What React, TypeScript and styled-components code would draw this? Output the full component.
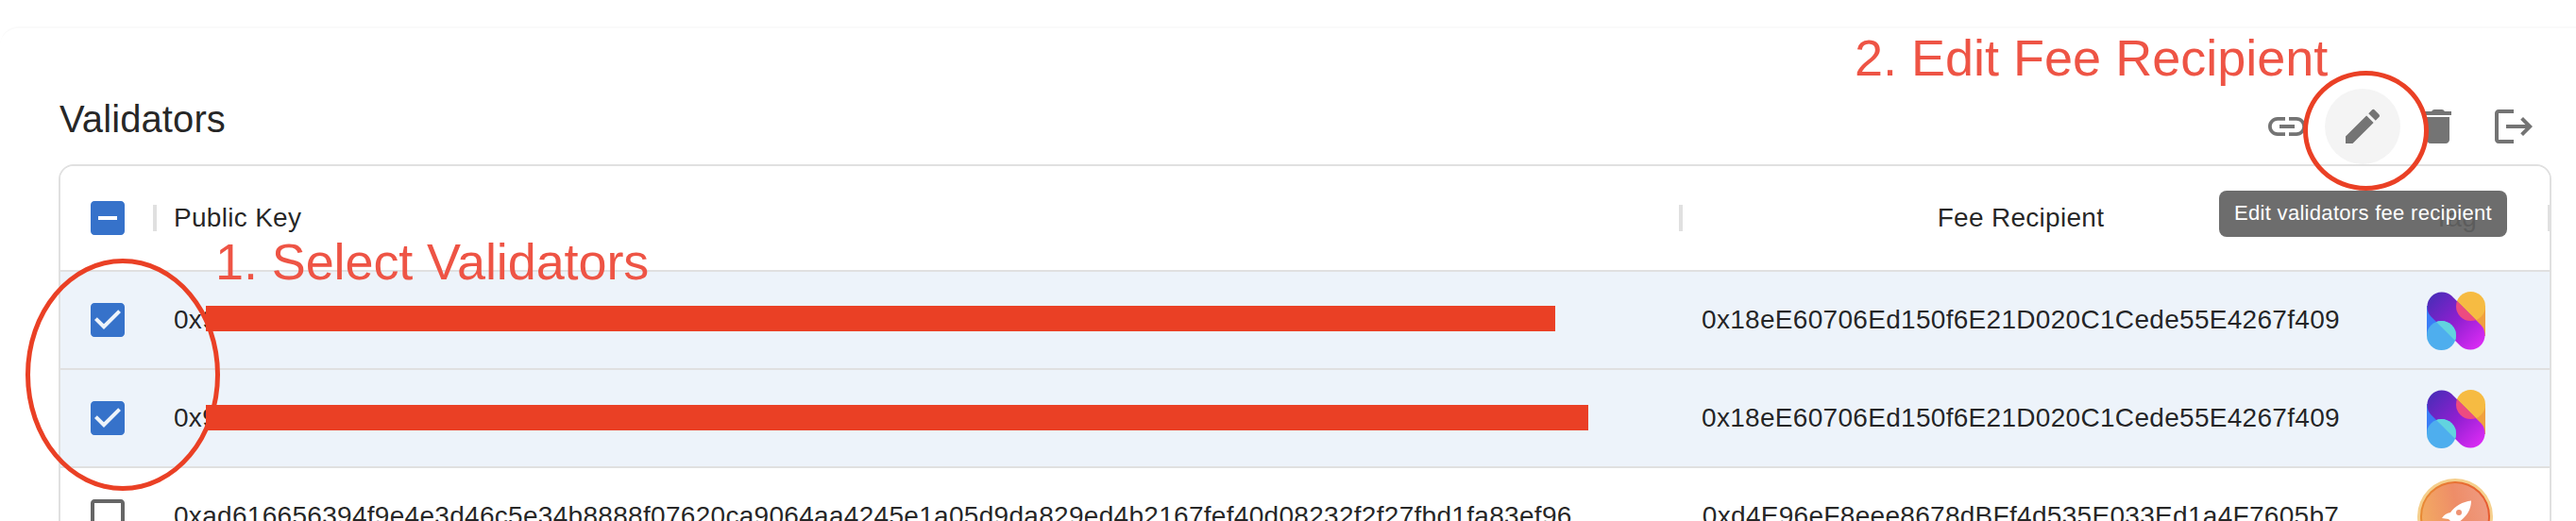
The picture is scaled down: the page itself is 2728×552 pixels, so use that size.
import React from "react";
import styled, { createGlobalStyle } from "styled-components";

const Global = createGlobalStyle`
  *, *::before, *::after { box-sizing: border-box; }
  html, body { margin: 0; height: 552px; overflow: hidden; background: #fff; }
  body { font-family: "Liberation Sans", Arial, Helvetica, sans-serif; color: rgba(0, 0, 0, 0.87); }
  svg { display: block; flex: none; }
`;

const Screen = styled.div`
  position: relative;
  width: 2728px;
  height: 552px;
  padding-top: 28px;
  overflow: hidden;
`;

const Card = styled.main`
  width: 2728px;
  height: 640px;
  padding: 64px 26px 0 62px;
  border-radius: 20px 0 0 0;
  border-top: 2px solid #fafafa;
`;

const Toolbar = styled.header`
  display: flex;
  justify-content: space-between;
  height: 80px;
  align-items: center;
`;

const Title = styled.h1`
  margin: 0;
  padding: 0 0 16px 1px;
  font-size: 40px;
  line-height: 64px;
  font-weight: 400;
  letter-spacing: 0.1px;
`;

const Actions = styled.div`
  display: flex;
`;

const IconButton = styled.button<{ $hover?: boolean }>`
  display: grid;
  place-items: center;
  width: 80px;
  height: 80px;
  padding: 0;
  border: 0;
  border-radius: 50%;
  background: ${(p) => (p.$hover ? "#f4f4f4" : "transparent")};
  color: #747474;
`;

const Grid = styled.section`
  width: 2640px;
  height: 500px;
  border: 2px solid #e0e0e0;
  border-radius: 16px;
  overflow: hidden;
  font-size: 28px;
  letter-spacing: 0.3px;
`;

const Row = styled.div<{ $selected?: boolean; $head?: boolean }>`
  display: grid;
  grid-template-columns: 100px 1616px 720px 200px;
  height: ${(p) => (p.$head ? 112 : 104)}px;
  border-bottom: 2px solid #e0e0e0;
  background: ${(p) => (p.$selected ? "#edf3fa" : "#fff")};
`;

const Cell = styled.div<{ $center?: boolean; $divider?: boolean }>`
  position: relative;
  display: flex;
  align-items: center;
  justify-content: ${(p) => (p.$center ? "center" : "flex-start")};
  padding: 0 ${(p) => (p.$center ? 0 : 20)}px;
  white-space: nowrap;
  &::after {
    content: ${(p) => (p.$divider ? '""' : "none")};
    position: absolute;
    right: -2px;
    width: 4px;
    height: 28px;
    background: #e0e0e0;
  }
`;

const Tooltip = styled.div`
  position: absolute;
  left: 2350px;
  top: 202px;
  width: 305px;
  height: 49px;
  border-radius: 8px;
  background: rgba(97, 97, 97, 0.92);
  color: #fff;
  font-size: 22px;
  line-height: 48px;
  letter-spacing: 0.3px;
  text-align: center;
  white-space: nowrap;
`;

const Note = styled.div<{ $x: number; $y: number; $spacing: number }>`
  position: absolute;
  left: ${(p) => p.$x}px;
  top: ${(p) => p.$y}px;
  color: #ee5445;
  font-size: 54px;
  line-height: 60px;
  letter-spacing: ${(p) => p.$spacing}px;
  white-space: nowrap;
`;

const Ring = styled.div<{ $x: number; $y: number; $w: number; $h: number }>`
  position: absolute;
  left: ${(p) => p.$x}px;
  top: ${(p) => p.$y}px;
  width: ${(p) => p.$w}px;
  height: ${(p) => p.$h}px;
  border: 5px solid #ea4025;
  border-radius: 50%;
`;

const Redaction = styled.div<{ $y: number; $w: number }>`
  position: absolute;
  left: 218px;
  top: ${(p) => p.$y}px;
  width: ${(p) => p.$w}px;
  height: 27px;
  background: #ea4025;
`;

const Icon = ({ d, color = "currentColor" }: { d: string; color?: string }) => (
  <svg width="48" height="48" viewBox="0 0 24 24" fill={color}>
    <path d={d} />
  </svg>
);

const paths = {
  link: "M3.9 12c0-1.71 1.39-3.1 3.1-3.1h4V7H7c-2.76 0-5 2.24-5 5s2.24 5 5 5h4v-1.9H7c-1.71 0-3.1-1.39-3.1-3.1zM8 13h8v-2H8v2zm9-6h-4v1.9h4c1.71 0 3.1 1.39 3.1 3.1s-1.39 3.1-3.1 3.1h-4V17h4c2.76 0 5-2.24 5-5s-2.24-5-5-5z",
  edit: "M3 17.25V21h3.75L17.81 9.94l-3.75-3.75L3 17.25zM20.71 7.04c.39-.39.39-1.02 0-1.41l-2.34-2.34a.9959.9959 0 0 0-1.41 0l-1.83 1.83 3.75 3.75 1.83-1.83z",
  trash: "M6 19c0 1.1.9 2 2 2h8c1.1 0 2-.9 2-2V7H6v12zM19 4h-3.5l-.7-.7c-.2-.2-.5-.3-.8-.3h-4c-.3 0-.6.1-.8.3l-.7.7H5v2h14V4z",
  exit: "M4 3h8v2H4v14h8v2H4c-1.1 0-2-.9-2-2V5c0-1.1.9-2 2-2zM8 11h10.2l-2.6-2.6L17 7l5 5-5 5-1.4-1.4 2.6-2.6H8z",
  minus: "M19 3H5c-1.1 0-2 .9-2 2v14c0 1.1.9 2 2 2h14c1.1 0 2-.9 2-2V5c0-1.1-.9-2-2-2zm-2 10H7v-2h10v2z",
  check: "M19 3H5c-1.11 0-2 .9-2 2v14c0 1.1.89 2 2 2h14c1.11 0 2-.9 2-2V5c0-1.1-.89-2-2-2zm-9 14l-5-5 1.41-1.41L10 14.17l7.59-7.59L19 8l-9 9z",
  empty: "M19 5v14H5V5h14m0-2H5c-1.1 0-2 .9-2 2v14c0 1.1.9 2 2 2h14c1.1 0 2-.9 2-2V5c0-1.1-.9-2-2-2z",
};

const NimbusLogo = ({ id }: { id: string }) => (
  <svg width="80" height="80" viewBox="0 0 80 80">
    <defs>
      <linearGradient id={id} gradientUnits="userSpaceOnUse" x1="14" y1="14" x2="68" y2="68">
        <stop offset="0" stopColor="#4a2cb8" />
        <stop offset="0.5" stopColor="#8f1fd0" />
        <stop offset="1" stopColor="#dc2cf5" />
      </linearGradient>
      <clipPath id={id + "c"}>
        <path d="M14.5 36.5A15.5 15.5 0 0 1 36.4 14.6L67.5 45.5A15.5 15.5 0 0 1 45.6 67.4Z" />
      </clipPath>
    </defs>
    <rect x="10" y="25" width="20" height="32" fill="#3b7df6" />
    <rect x="52" y="25" width="20" height="32" fill="#f0a03f" />
    <circle cx="56.5" cy="25.5" r="15.5" fill="#f6bb42" />
    <path d="M14.5 36.5A15.5 15.5 0 0 1 36.4 14.6L67.5 45.5A15.5 15.5 0 0 1 45.6 67.4Z" fill={`url(#${id})`} />
    <circle cx="25.5" cy="56.5" r="15.5" fill="#4eaeee" />
    <g clipPath={`url(#${id}c)`}>
      <circle cx="56.5" cy="25.5" r="15.5" fill="#ed4b80" />
      <circle cx="25.5" cy="56.5" r="15.5" fill="#62d3df" />
    </g>
  </svg>
);

const RocketLogo = () => (
  <svg width="80" height="80" viewBox="0 0 80 80">
    <defs>
      <linearGradient id="coin" x1="0" y1="0.6" x2="1" y2="0.4">
        <stop offset="0" stopColor="#f3ab62" />
        <stop offset="0.55" stopColor="#ee8d68" />
        <stop offset="1" stopColor="#ef9a80" />
      </linearGradient>
      <linearGradient id="rim" x1="0" y1="0" x2="1" y2="0">
        <stop offset="0" stopColor="#e88a35" />
        <stop offset="1" stopColor="#e75a30" />
      </linearGradient>
    </defs>
    <circle cx="40" cy="40" r="40" fill="#f5cf8c" />
    <circle cx="40" cy="40" r="37" fill="url(#rim)" />
    <circle cx="40" cy="40" r="35" fill="url(#coin)" />
    <path d="M57 23.5C48 24.5 40 29 35 36C31 36.5 28 38.5 26 42L33 43L38 48L40 55C44 52 45.5 49 45.5 45C52 40 57 33 57 23.5Z" fill="#fff" />
    <circle cx="44" cy="36" r="3" fill="#ee9273" />
  </svg>
);

const feeAddress = "0x18eE60706Ed150f6E21D020C1Cede55E4267f409";

const rows = [
  { key: "0x9", fee: feeAddress, selected: true },
  { key: "0x9", fee: feeAddress, selected: true },
  {
    key: "0xad616656394f9e4e3d46c5e34b8888f07620ca9064aa4245e1a05d9da829ed4b2167fef40d08232f2f27fbd1fa83ef96",
    fee: "0xd4E96eF8eee8678dBFf4d535E033Ed1a4F7605b7",
    selected: false,
  },
];

export default function App() {
  return (
    <>
      <Global />
      <Screen>
        <Card>
          <Toolbar>
            <Title>Validators</Title>
            <Actions>
              <IconButton><Icon d={paths.link} /></IconButton>
              <IconButton $hover><Icon d={paths.edit} /></IconButton>
              <IconButton><Icon d={paths.trash} /></IconButton>
              <IconButton><Icon d={paths.exit} /></IconButton>
            </Actions>
          </Toolbar>
          <Grid>
            <Row $head>
              <Cell $center $divider><Icon d={paths.minus} color="#3672ca" /></Cell>
              <Cell $divider>Public Key</Cell>
              <Cell $center>Fee Recipient</Cell>
              <Cell $center $divider>Tag</Cell>
            </Row>
            {rows.map((row, i) => (
              <Row key={i} $selected={row.selected}>
                <Cell $center>
                  <Icon d={row.selected ? paths.check : paths.empty} color={row.selected ? "#3672ca" : "#666"} />
                </Cell>
                <Cell>{row.key}</Cell>
                <Cell $center>{row.fee}</Cell>
                <Cell $center>{row.selected ? <NimbusLogo id={"nimbus" + i} /> : <RocketLogo />}</Cell>
              </Row>
            ))}
          </Grid>
        </Card>
        <Tooltip>Edit validators fee recipient</Tooltip>
        <Note $x={228} $y={247} $spacing={-0.1}>1. Select Validators</Note>
        <Note $x={1964} $y={31} $spacing={0}>2. Edit Fee Recipient</Note>
        <Ring $x={26.5} $y={274} $w={206} $h={245.5} />
        <Ring $x={2438.5} $y={75} $w={133} $h={126.5} />
        <Redaction $y={324} $w={1429} />
        <Redaction $y={429} $w={1464} />
      </Screen>
    </>
  );
}
